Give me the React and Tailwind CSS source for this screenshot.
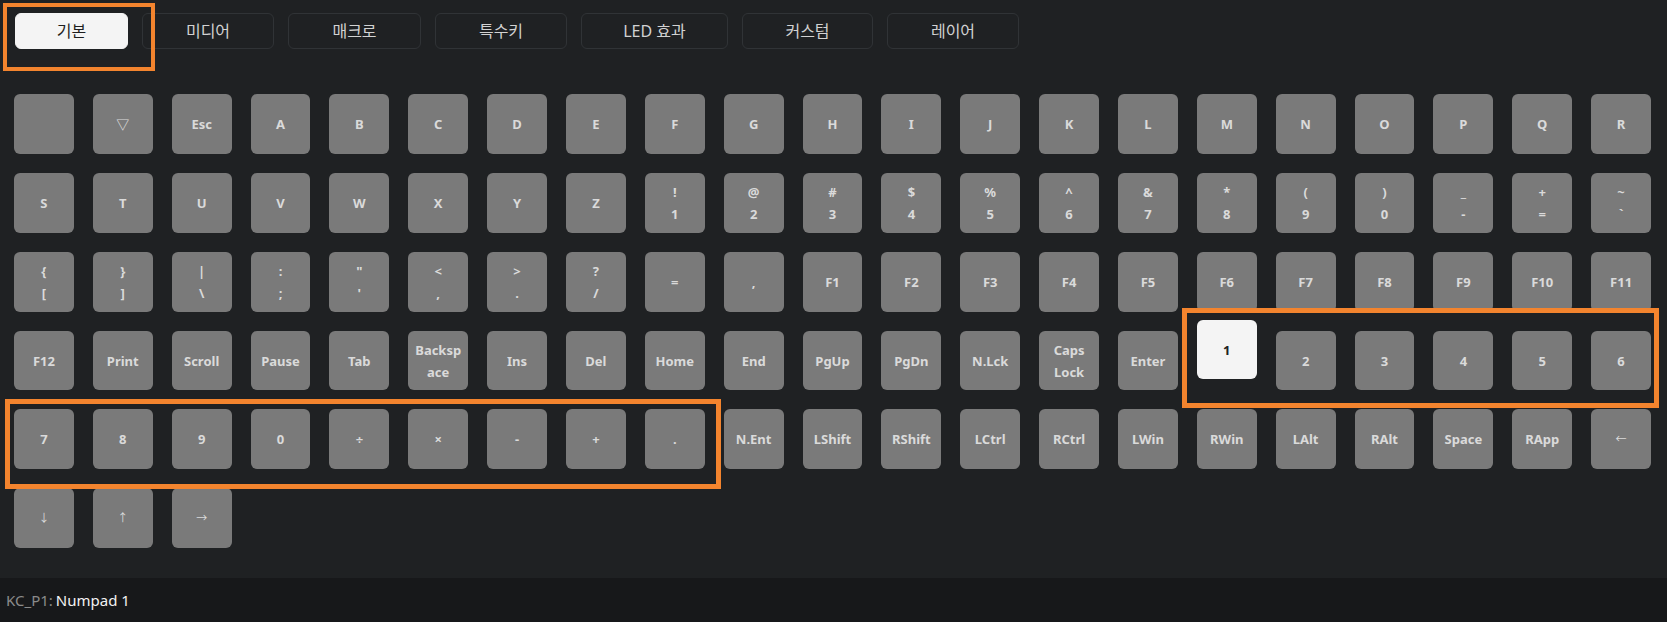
import React from 'react'

const tabs = [
    { label: '기본', w: 'w-[113px]' },
    { label: '미디어', w: 'w-[132px]' },
    { label: '매크로', w: 'w-[133px]' },
    { label: '특수키', w: 'w-[132px]' },
    { label: 'LED 효과', w: 'w-[147px]' },
    { label: '커스텀', w: 'w-[131px]' },
    { label: '레이어', w: 'w-[132px]' },
]

const keys = [
    '', '▽', 'Esc', 'A', 'B', 'C', 'D', 'E', 'F', 'G', 'H', 'I', 'J', 'K', 'L', 'M', 'N', 'O', 'P', 'Q', 'R',
    'S', 'T', 'U', 'V', 'W', 'X', 'Y', 'Z',
    ['!', '1'], ['@', '2'], ['#', '3'], ['$', '4'], ['%', '5'], ['^', '6'], ['&', '7'], ['*', '8'], ['(', '9'], [')', '0'],
    ['_', '-'], ['+', '='], ['~', '`'],
    ['{', '['], ['}', ']'], ['|', '\\'], [':', ';'], ['"', "'"], ['<', ','], ['>', '.'], ['?', '/'], '=', ',',
    'F1', 'F2', 'F3', 'F4', 'F5', 'F6', 'F7', 'F8', 'F9', 'F10', 'F11',
    'F12', 'Print', 'Scroll', 'Pause', 'Tab', 'Backspace', 'Ins', 'Del', 'Home', 'End', 'PgUp', 'PgDn', 'N.Lck', 'Caps Lock', 'Enter',
    '1', '2', '3', '4', '5', '6',
    '7', '8', '9', '0', '÷', '×', '-', '+', '.', 'N.Ent', 'LShift', 'RShift', 'LCtrl', 'RCtrl', 'LWin', 'RWin', 'LAlt', 'RAlt', 'Space', 'RApp', '←',
    '↓', '↑', '→',
]

const SELECTED = 78
const ARROWS = ['←', '↓', '↑', '→']

const Key = ({ label, selected }) => {
    const lines = Array.isArray(label) ? label : [label]
    const small = ARROWS.includes(label)
    return (
        <div
            className={`flex aspect-square flex-col items-center justify-center rounded-[6px] px-[5px] text-center leading-[22px] [overflow-wrap:anywhere] ${
                small ? 'text-[11px] font-normal' : 'text-[13px] font-bold'
            } ${selected ? '-translate-y-[11px] bg-[#f4f4f4] text-[#222222]' : 'bg-[#7a7a7a] text-[#dadada]'}`}
        >
            {lines.map((l, i) => (
                <span key={i}>{l}</span>
            ))}
        </div>
    )
}

export default function App() {
    return (
        <div
            className="relative flex h-screen flex-col overflow-hidden bg-[#1f2123]"
            style={{ fontFamily: '"Noto Sans", "Noto Sans CJK KR", sans-serif' }}
        >
            {/* Tabs */}
            <div className="flex gap-[14px] pl-[15px] pt-[13px]">
                {tabs.map((t, i) => (
                    <button
                        key={t.label}
                        className={`h-[36px] rounded-[6px] border text-[16px] ${t.w} ${
                            i === 0
                                ? 'border-[#f4f4f4] bg-[#f4f4f4] text-[#1e1e1e]'
                                : 'border-[#303336] bg-transparent text-[#d2d2d2]'
                        }`}
                    >
                        {t.label}
                    </button>
                ))}
            </div>

            {/* Key grid */}
            <div className="flex-1">
                <div className="grid grid-cols-[repeat(21,minmax(0,1fr))] gap-[19px] pl-[14px] pr-[16px] pt-[45px]">
                    {keys.map((k, i) => (
                        <Key key={i} label={k} selected={i === SELECTED} />
                    ))}
                </div>
            </div>

            {/* Status bar */}
            <div className="flex h-[44px] items-center bg-[#17181a] pl-[6px] text-[15px]">
                <span className="text-[#8a8a8a]">KC_P1:</span>
                <span className="ml-[3px] text-[#f2f2f2]">Numpad 1</span>
            </div>

            {/* Highlight annotations */}
            <div className="pointer-events-none absolute left-[3px] top-[3px] h-[68px] w-[152px] border-[4px] border-[#f3842e]" />
            <div className="pointer-events-none absolute left-[1182px] top-[308px] h-[100px] w-[477px] border-[5px] border-[#f3842e]" />
            <div className="pointer-events-none absolute left-[5px] top-[399px] h-[90px] w-[716px] border-[5px] border-[#f3842e]" />
        </div>
    )
}
